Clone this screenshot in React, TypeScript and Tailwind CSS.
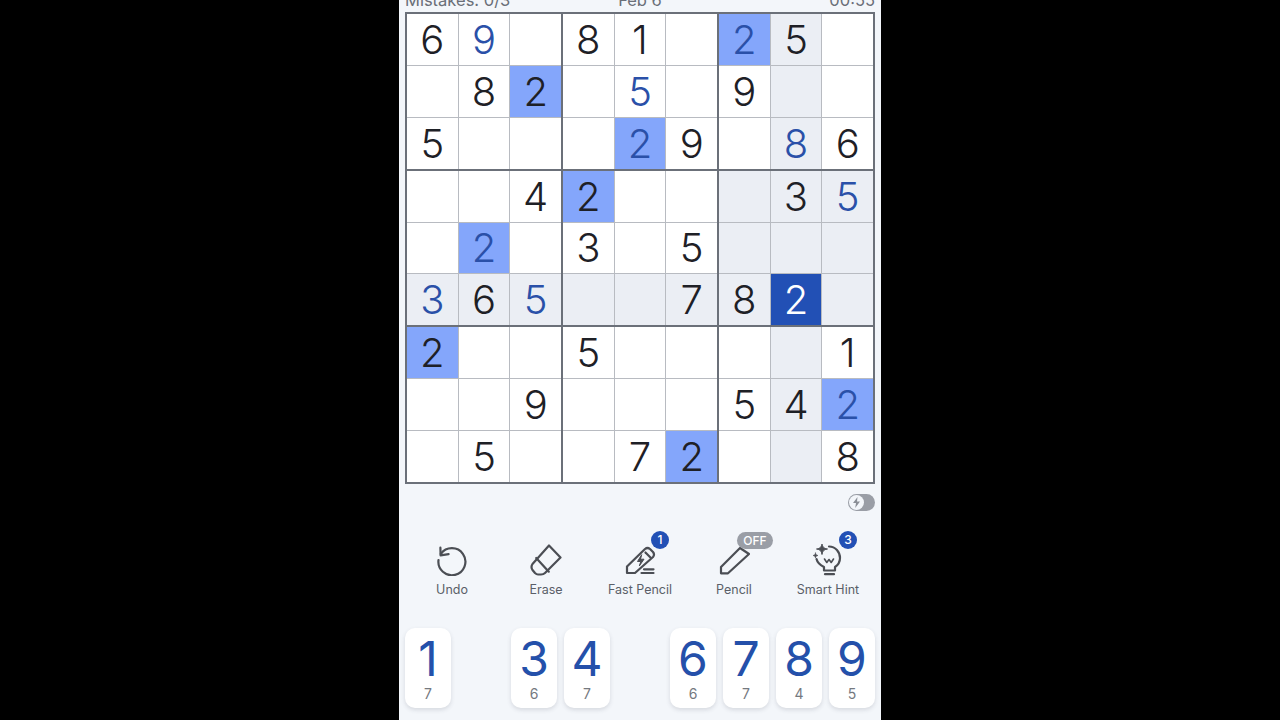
import type { ReactNode } from "react";

// --- Board data ---
// bg: p = row/col/box peer, m = same digit, s = selected
type Cell = { v?: string; blue?: boolean; bg?: "p" | "m" | "s" };

const E: Cell = {};
const g = (v: string, bg?: Cell["bg"]): Cell => ({ v, bg });
const b = (v: string, bg?: Cell["bg"]): Cell => ({ v, blue: true, bg });
const P: Cell = { bg: "p" };

const board: Cell[][] = [
  [g("6"), b("9"), E, g("8"), g("1"), E, b("2", "m"), g("5", "p"), E],
  [E, g("8"), g("2", "m"), E, b("5"), E, g("9"), P, E],
  [g("5"), E, E, E, b("2", "m"), g("9"), E, b("8", "p"), g("6")],
  [E, E, g("4"), g("2", "m"), E, E, P, g("3", "p"), b("5", "p")],
  [E, b("2", "m"), E, g("3"), E, g("5"), P, P, P],
  [b("3", "p"), g("6", "p"), b("5", "p"), P, P, g("7", "p"), g("8", "p"), { v: "2", bg: "s" }, P],
  [g("2", "m"), E, E, g("5"), E, E, E, P, g("1")],
  [E, E, g("9"), E, E, E, g("5"), g("4", "p"), b("2", "m")],
  [E, g("5"), E, E, g("7"), g("2", "m"), E, P, g("8")],
];

const pad = [
  { n: "1", left: "7" },
  null,
  { n: "3", left: "6" },
  { n: "4", left: "7" },
  null,
  { n: "6", left: "6" },
  { n: "7", left: "7" },
  { n: "8", left: "4" },
  { n: "9", left: "5" },
];

function BoardCell({ cell }: { cell: Cell }) {
  const bg =
    cell.bg === "s"
      ? "bg-[#2250b5]"
      : cell.bg === "m"
        ? "bg-[#84a6fb]"
        : cell.bg === "p"
          ? "bg-[#ebeef4]"
          : "bg-white";
  const text =
    cell.bg === "s" ? "text-white" : cell.blue ? "text-[#2a50a8]" : "text-[#1e2026]";
  return (
    <div className={`flex items-center justify-center pt-px text-[40px] font-light leading-none ${bg} ${text}`}>
      {cell.v}
    </div>
  );
}

function Badge({ children }: { children: ReactNode }) {
  return (
    <span className="absolute -top-[13px] left-[27px] w-[18px] h-[18px] rounded-full bg-[#2250b5] text-white text-[12px] font-medium flex items-center justify-center">
      {children}
    </span>
  );
}

function Action({ label, icon, badge }: { label: string; icon: ReactNode; badge?: ReactNode }) {
  return (
    <div className="flex flex-col items-center">
      <div className="relative w-[32px] h-[32px]">
        {icon}
        {badge}
      </div>
      <span className="mt-[5px] text-[12.5px] leading-[17px] text-[#5a5f68]">{label}</span>
    </div>
  );
}

const stroke = { fill: "none", stroke: "#4b4e54", strokeWidth: 2.2, strokeLinecap: "round", strokeLinejoin: "round" } as const;

const UndoIcon = (
  <svg width="32" height="32" viewBox="0 0 32 32" {...stroke}>
    <path d="M4.8 10A13.5 13.5 0 1 1 2.5 16" />
    <path d="M4.4 3.7 4.6 11.4 12.6 10.2" />
  </svg>
);

const EraseIcon = (
  <svg width="32" height="32" viewBox="0 0 32 32" {...stroke}>
    <path d="M19 1.5 30.5 13.5 15 29Q13.5 30.5 11 30.5H8Q6.5 30.5 5 29L2.5 26Q.5 23 2.5 20Z" />
    <path d="M6.2 14 18.8 27.7" />
  </svg>
);

const FastPencilIcon = (
  <svg width="32" height="32" viewBox="0 0 32 32" {...stroke}>
    <path d="M3 22.5 21 5Q23.5 3 26 5L29 8Q31 10.5 29 13L11 29H3Z" />
    <path d="M21.5 8.5 26.5 13.5" />
    <path d="M17.5 11 13.5 17.5H16.8L15.3 22 20 15.2H16.8Z" fill="#4b4e54" strokeWidth="1" />
    <path d="M20 25.3H29.5M17.5 29H29.5" />
  </svg>
);

const PencilIcon = (
  <svg width="32" height="32" viewBox="0 0 32 32" {...stroke}>
    <path d="M3 23 22 4 31 10 10 29.3H3Z" />
  </svg>
);

const HintIcon = (
  <svg width="32" height="32" viewBox="0 0 32 32" {...stroke}>
    <path d="M17 2.5C23.5 2.5 28 8 28 14C28 18 26 21 23 23V26.5H12V23C8 21 5.5 19 4.5 15" />
    <path d="M13 30.2H22" />
    <path d="M12.5 15 14.8 18.5 17 15.5 19.2 18.5 21.5 15" strokeWidth="1.6" />
    <path d="M10 -.5C10.6 3.2 11.8 4.4 15.5 5 11.8 5.6 10.6 6.8 10 10.5 9.4 6.8 8.2 5.6 4.5 5 8.2 4.4 9.4 3.2 10 -.5Z" fill="#4b4e54" strokeWidth="1" />
    <path d="M3.5 9C3.8 10.6 4.4 11.2 6 11.5 4.4 11.8 3.8 12.4 3.5 14 3.2 12.4 2.6 11.8 1 11.5 2.6 11.2 3.2 10.6 3.5 9Z" fill="#4b4e54" strokeWidth=".6" />
  </svg>
);

export default function App() {
  return (
    <div className="h-[720px] w-full bg-black flex justify-center overflow-hidden font-['Inter',sans-serif]">
      <div className="w-[482px] h-[720px] bg-[#f3f6fa] px-[6px] overflow-hidden">
        <header className="-mt-[9px] h-[21px] grid grid-cols-3 items-start text-[16.5px] leading-[18px] text-[#6a6f78]">
          <span className="whitespace-nowrap">Mistakes: 0/3</span>
          <span className="text-center">Feb 6</span>
          <span className="text-right">00:55</span>
        </header>

        <div className="grid grid-cols-3 grid-rows-3 gap-[2px] w-[470px] h-[472px] bg-[#6b7079] border-2 border-[#6b7079]">
          {[0, 1, 2].map((R) =>
            [0, 1, 2].map((C) => (
              <div key={`${R}-${C}`} className="grid grid-cols-3 grid-rows-3 gap-px bg-[#b8bbc1]">
                {[0, 1, 2].map((r) =>
                  [0, 1, 2].map((c) => <BoardCell key={`${r}-${c}`} cell={board[R * 3 + r][C * 3 + c]} />)
                )}
              </div>
            ))
          )}
        </div>

        <div className="flex justify-end mt-[10px] h-[17px]">
          <div className="w-[27px] h-[17px] rounded-full bg-[#9a9ea6] p-[1px]">
            <div className="w-[15px] h-[15px] rounded-full bg-[#f3f6fa] flex items-center justify-center">
              <svg width="9" height="11" viewBox="0 0 9 11">
                <path d="M5.5 0 1 6h3l-.8 5L8 4.6H5Z" fill="#8b8f97" />
              </svg>
            </div>
          </div>
        </div>

        <div className="mt-[33px] grid grid-cols-5 w-[470px] h-[60px]">
          <Action label="Undo" icon={UndoIcon} />
          <Action label="Erase" icon={EraseIcon} />
          <Action label="Fast Pencil" icon={FastPencilIcon} badge={<Badge>1</Badge>} />
          <Action
            label="Pencil"
            icon={PencilIcon}
            badge={
              <span className="absolute -top-[12px] left-[19px] w-[36px] h-[17px] rounded-full bg-[#9a9ea6] text-white text-[12px] font-medium flex items-center justify-center">
                OFF
              </span>
            }
          />
          <Action label="Smart Hint" icon={HintIcon} badge={<Badge>3</Badge>} />
        </div>

        <div className="mt-[24px] grid grid-cols-9 gap-[7px] w-[470px]">
          {pad.map((p, i) =>
            p ? (
              <div
                key={i}
                className="h-[80px] rounded-[10px] bg-white shadow-[0_2px_4px_rgba(60,70,90,0.16)] flex flex-col items-center"
              >
                <span className="mt-[6px] text-[48px] leading-[50px] text-[#2450aa]">{p.n}</span>
                <span className="mt-[2px] text-[14px] leading-[16px] text-[#75797f]">{p.left}</span>
              </div>
            ) : (
              <div key={i} />
            )
          )}
        </div>
      </div>
    </div>
  );
}
